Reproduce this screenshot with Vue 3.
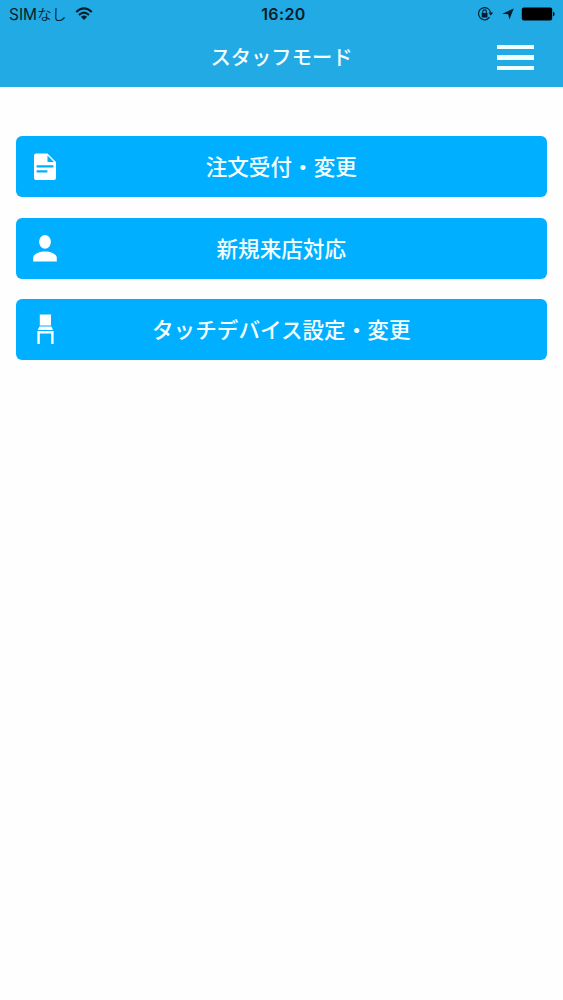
<script setup>
const actions = [
  { icon: 'document', label: '注文受付・変更' },
  { icon: 'person', label: '新規来店対応' },
  { icon: 'chair', label: 'タッチデバイス設定・変更' },
]
</script>

<template>
  <div class="screen">
    <header class="header">
      <div class="status">
        <div class="carrier">
          <span class="carrier-name">SIM<span class="kana">なし</span></span>
          <svg class="wifi" width="18" height="14" viewBox="0 0 18 14">
            <g fill="none" stroke="#061d2b" stroke-width="2.1">
              <path d="M1.2 5Q9-2.3 16.8 5" />
              <path d="M4 8Q9 3.2 14 8" />
            </g>
            <path d="M5.9 9.8Q9 7 12.1 9.8L9 13Z" fill="#061d2b" />
          </svg>
        </div>
        <span class="time">16:20</span>
        <div class="indicators">
          <svg width="17" height="16" viewBox="0 0 17 16">
            <path d="M12.6 11.2A6.1 6.1 0 1 1 13.6 6.5" fill="none" stroke="#061d2b" stroke-width="1.2" />
            <path d="M11.4 6.6H16.2L13.8 9.4Z" fill="#061d2b" />
            <rect x="4.7" y="7" width="5.8" height="4.6" rx=".5" fill="#061d2b" />
            <path d="M5.8 7V5.7a1.8 1.8 0 0 1 3.6 0V7" fill="none" stroke="#061d2b" stroke-width="1.1" />
          </svg>
          <svg class="arrow" width="12" height="12" viewBox="0 0 12 12">
            <path d="M11.8.4L7.4 11.6 6.2 6.3.3 5.8Z" fill="#061d2b" />
          </svg>
          <svg class="battery" width="34" height="14" viewBox="0 0 34 14">
            <rect x=".8" y=".5" width="30.4" height="13" rx="2" fill="#000" />
            <path d="M32 4.8q1.6.5 1.6 2.2t-1.6 2.2z" fill="#000" />
          </svg>
        </div>
      </div>
      <div class="navbar">
        <h1>スタッフモード</h1>
        <button class="menu" aria-label="メニュー"><i></i><i></i><i></i></button>
      </div>
    </header>
    <main class="actions">
      <button v-for="item in actions" :key="item.icon" class="action">
        <svg class="icon" width="30" height="34" viewBox="0 0 30 34">
          <template v-if="item.icon === 'document'">
            <path d="M6.2 3.6H17.5L26 12V28a2 2 0 0 1-2 2H6a2 2 0 0 1-2-2V5.8a2.2 2.2 0 0 1 2.2-2.2Z" fill="#fff" />
            <path d="M17.5 5.5V12H24Z M6.6 15.2H23.4V17.4H6.6Z M6.6 20.2H17.4V22.4H6.6Z" fill="#00afff" />
          </template>
          <template v-else-if="item.icon === 'person'">
            <ellipse cx="15" cy="10.8" rx="5.9" ry="6.9" fill="#fff" />
            <path d="M3.2 30.4V26.9C3.2 23 9 20.4 15 20.4s11.8 2.6 11.8 6.5V30.4Z" fill="#fff" />
          </template>
          <template v-else>
            <path d="M9.8 1.4H21V12.4H9.8Z M9.4 13.4H21.4L23 17H7.8Z M7.4 17.9H23.6V31H21.2V20.5H9.8V31H7.4Z" fill="#fff" />
          </template>
        </svg>
        <span class="label">{{ item.label }}</span>
      </button>
    </main>
  </div>
</template>

<style>
body {
  margin: 0;
  background: #fefefe;
}
</style>

<style scoped>
.screen {
  min-height: 1000px;
  font-family: "Noto Sans CJK JP", sans-serif;
  background: #fefefe;
}
.header {
  height: 87px;
  background: #22aae4;
}
.status {
  display: grid;
  grid-template-columns: 1fr auto 1fr;
  align-items: center;
  height: 28px;
  padding: 0 8px 0 9px;
  font-family: Inter, "Noto Sans CJK JP", sans-serif;
  font-size: 16px;
  line-height: 28px;
  color: #061d2b;
}
.carrier {
  display: flex;
  align-items: center;
  gap: 8px;
  font-size: 15.5px;
}
.carrier-name {
  padding-top: 2px;
  line-height: 26px;
}
.kana {
  font-size: 14.7px;
  font-weight: 350;
}
.time {
  padding-left: 3px;
  font-weight: 600;
  letter-spacing: .4px;
}
.indicators {
  display: flex;
  align-items: center;
  justify-content: flex-end;
}
.arrow {
  margin-left: 8px;
}
.battery {
  margin-left: 7px;
}
.navbar {
  display: grid;
  grid-template-columns: 1fr auto 1fr;
  align-items: center;
  height: 59px;
}
h1 {
  grid-column: 2;
  margin: 0;
  padding-bottom: 3px;
  font-size: 20.3px;
  font-weight: 500;
  line-height: 56px;
  color: #f4ffff;
}
.menu {
  display: flex;
  flex-direction: column;
  justify-self: end;
  gap: 6px;
  width: 37px;
  margin-right: 29px;
  padding: 0;
  border: 0;
  background: none;
}
.menu i {
  height: 4.4px;
  background: #f0ffff;
}
.actions {
  display: flex;
  flex-direction: column;
  gap: 20.5px;
  padding: 49px 16.5px 0 16px;
}
.action {
  display: grid;
  grid-template-columns: 30px 1fr 30px;
  align-items: center;
  height: 61px;
  padding: 0 14px;
  border: 0;
  border-radius: 6px;
  background: #00afff;
  color: #f4ffff;
  font-family: inherit;
  font-size: 21.6px;
  font-weight: 500;
  text-align: center;
}
.label {
  padding-bottom: 2px;
  line-height: 59px;
}
</style>
